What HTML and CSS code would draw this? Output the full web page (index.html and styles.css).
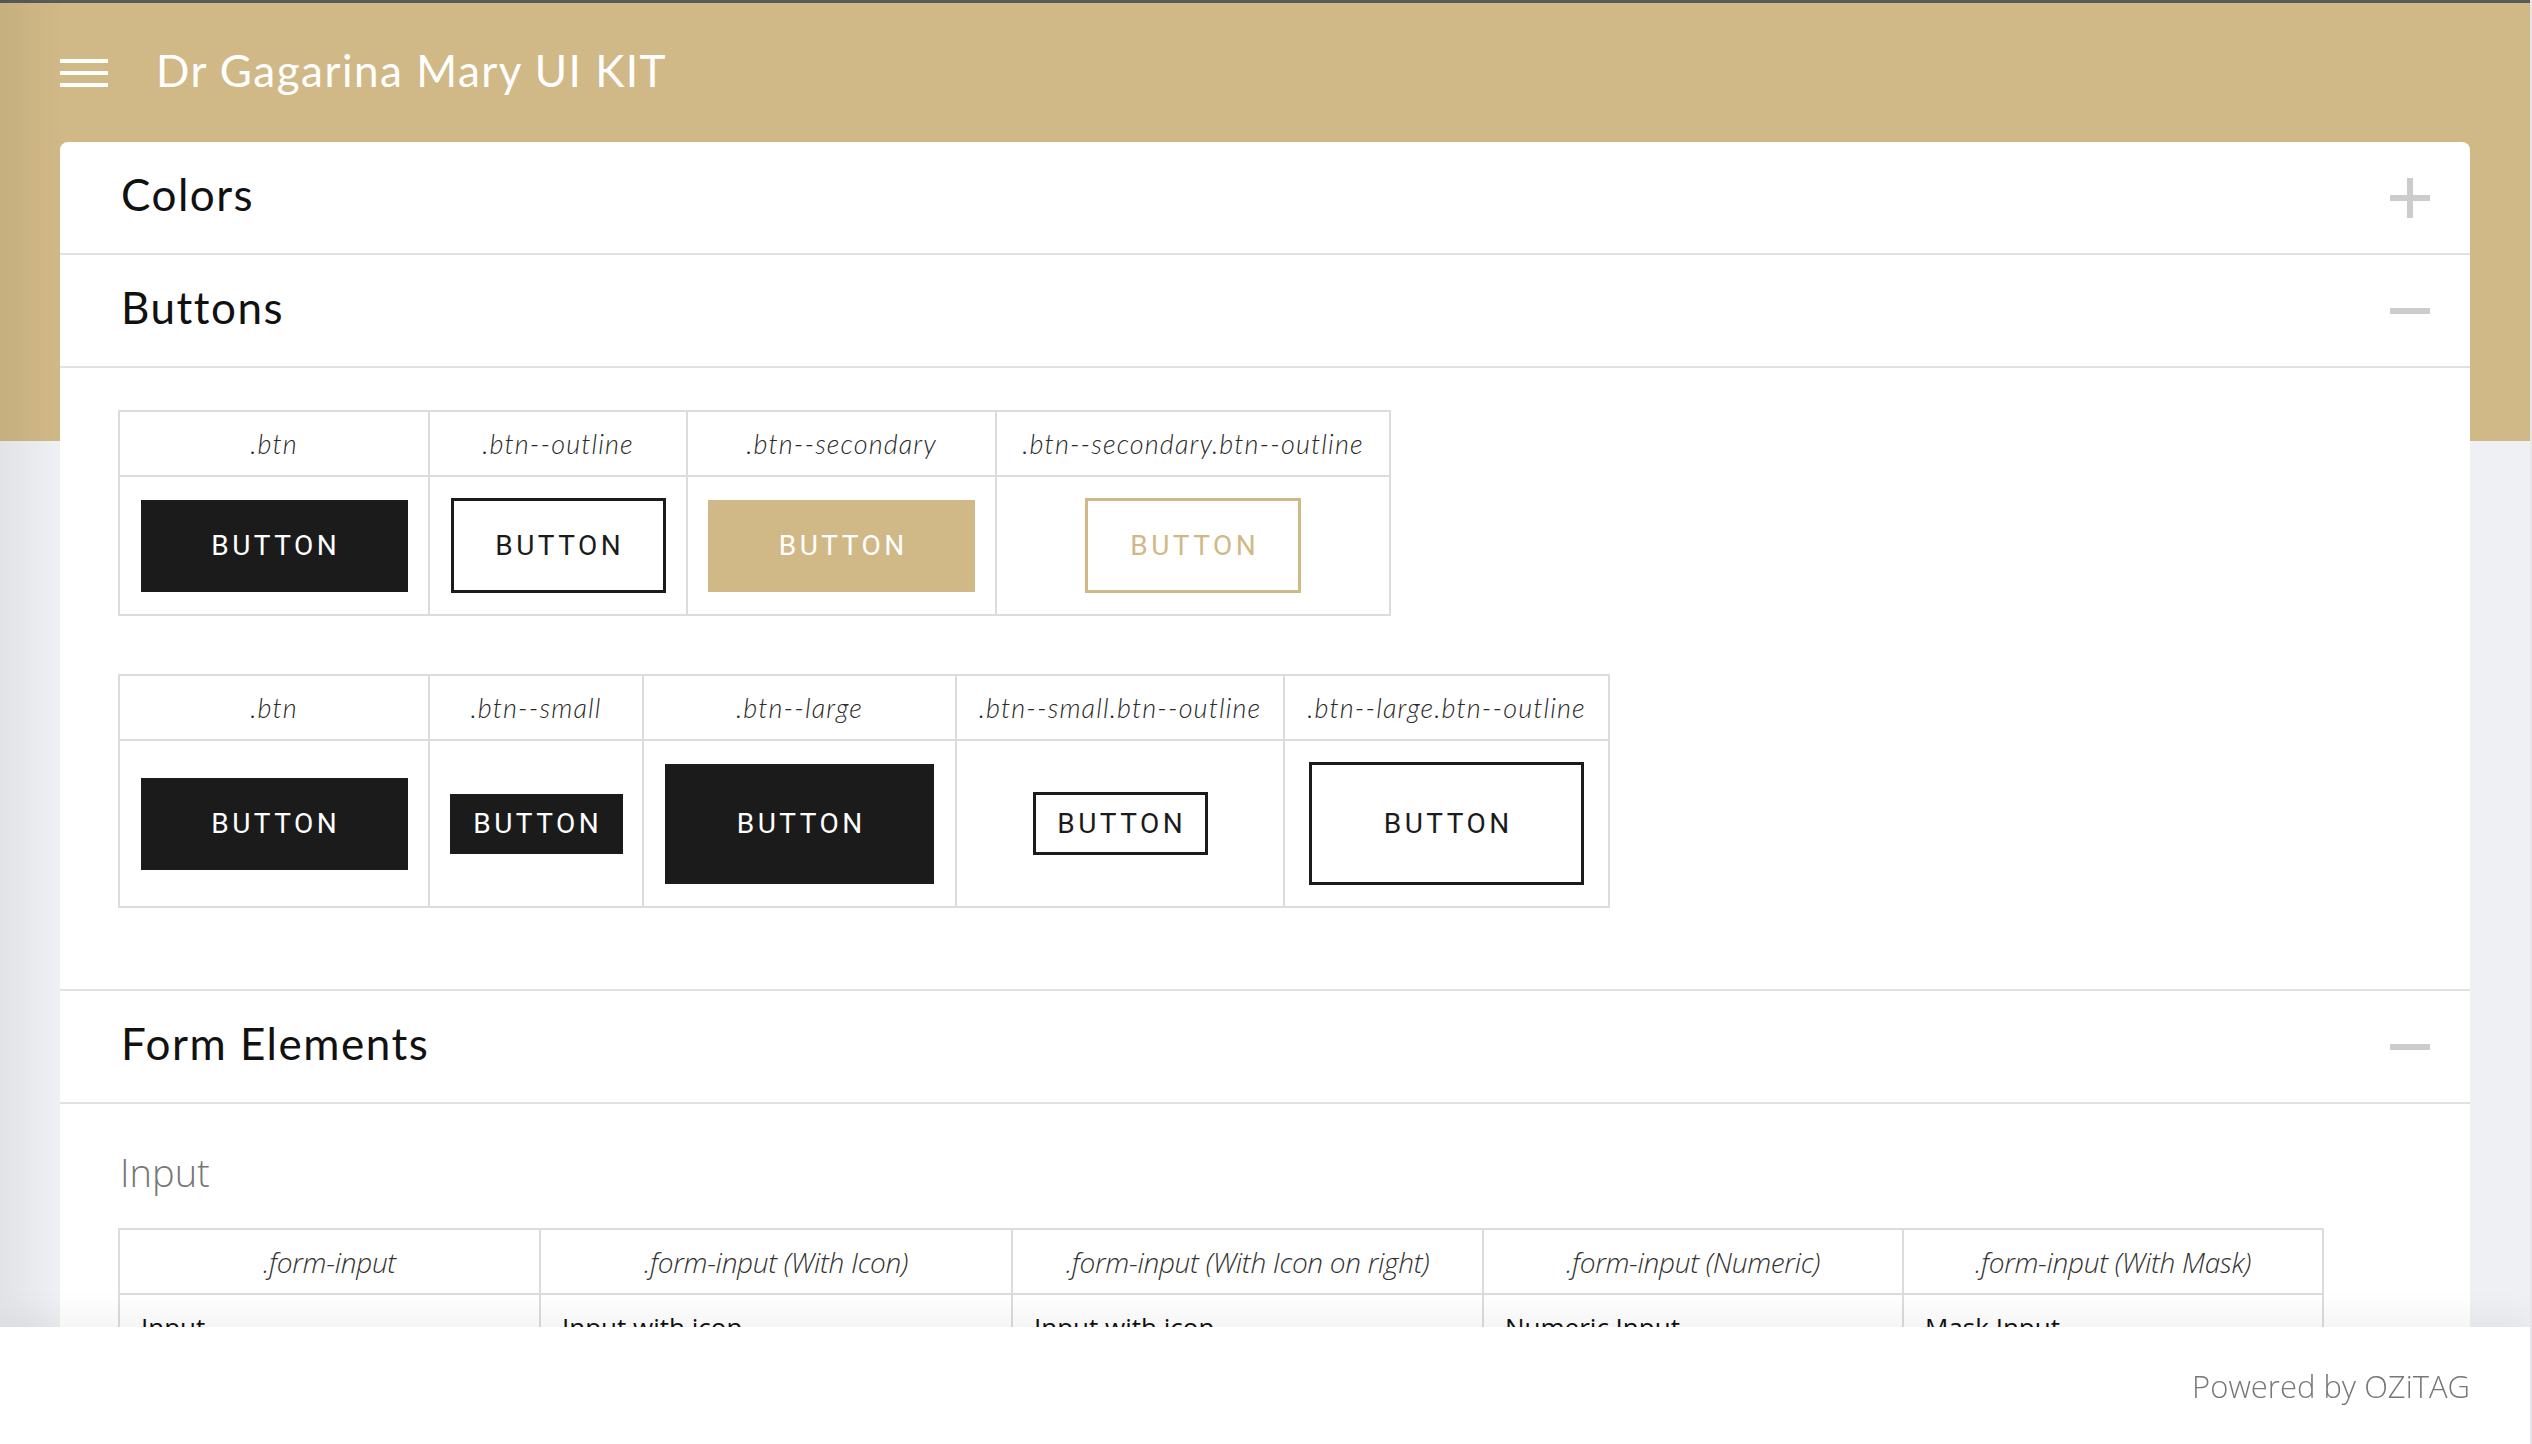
FILE: index.html
```html
<!DOCTYPE html>
<html lang="en">
<head>
<meta charset="utf-8">
<title>Dr Gagarina Mary UI KIT</title>
<link rel="stylesheet" href="styles.css">
</head>
<body>
<div class="page">
  <header class="topbar">
    <div class="burger"><span></span><span></span><span></span></div>
    <h1 class="app-title">Dr Gagarina Mary UI KIT</h1>
  </header>

  <main class="card">
    <section class="panel">
      <div class="panel-head">
        <h2 class="panel-title">Colors</h2>
        <svg class="toggle" width="40" height="40" viewBox="0 0 40 40"><rect x="0" y="17" width="40" height="6" fill="#cccccc"/><rect x="17" y="0" width="6" height="40" fill="#cccccc"/></svg>
      </div>
    </section>

    <section class="panel">
      <div class="panel-head">
        <h2 class="panel-title">Buttons</h2>
        <svg class="toggle" width="40" height="40" viewBox="0 0 40 40"><rect x="0" y="17" width="40" height="6" fill="#cccccc"/></svg>
      </div>
      <div class="panel-body buttons-body">
        <table class="demo demo-1">
          <colgroup><col class="w310"><col class="w258"><col class="w309"><col class="w394"></colgroup>
          <tr>
            <th>.btn</th><th>.btn--outline</th><th>.btn--secondary</th><th>.btn--secondary.btn--outline</th>
          </tr>
          <tr class="body-row">
            <td><button class="btn">BUTTON</button></td>
            <td><button class="btn btn--outline">BUTTON</button></td>
            <td><button class="btn btn--secondary">BUTTON</button></td>
            <td><button class="btn btn--secondary btn--outline">BUTTON</button></td>
          </tr>
        </table>

        <table class="demo demo-2">
          <colgroup><col class="w310"><col class="w214"><col class="w313"><col class="w328"><col class="w325"></colgroup>
          <tr>
            <th>.btn</th><th>.btn--small</th><th>.btn--large</th><th>.btn--small.btn--outline</th><th>.btn--large.btn--outline</th>
          </tr>
          <tr class="body-row">
            <td><button class="btn">BUTTON</button></td>
            <td><button class="btn btn--small">BUTTON</button></td>
            <td><button class="btn btn--large">BUTTON</button></td>
            <td><button class="btn btn--small btn--outline">BUTTON</button></td>
            <td><button class="btn btn--large btn--outline">BUTTON</button></td>
          </tr>
        </table>
      </div>
    </section>

    <section class="panel">
      <div class="panel-head">
        <h2 class="panel-title">Form Elements</h2>
        <svg class="toggle" width="40" height="40" viewBox="0 0 40 40"><rect x="0" y="17" width="40" height="6" fill="#cccccc"/></svg>
      </div>
      <div class="panel-body form-body">
        <h3 class="sub-title">Input</h3>
        <table class="demo demo-3">
          <colgroup><col class="w421"><col class="w472"><col class="w471"><col class="w420"><col class="w420"></colgroup>
          <tr class="form-head">
            <th>.form-input</th><th>.form-input (With Icon)</th><th>.form-input (With Icon on right)</th><th>.form-input (Numeric)</th><th>.form-input (With Mask)</th>
          </tr>
          <tr class="form-row">
            <td>Input</td><td>Input with icon</td><td>Input with icon</td><td>Numeric Input</td><td>Mask Input</td>
          </tr>
        </table>
      </div>
    </section>
  </main>

  <footer class="footer">Powered by OZiTAG</footer>
</div>
</body>
</html>
```

FILE: styles.css
```css
html, body {
  margin: 0;
  padding: 0;
}

body {
  height: 1444px;
  overflow: hidden;
  background: linear-gradient(#d1b987 0, #d1b987 441px, #eff0f4 441px, #eff0f4 100%);
  font-family: "Lato", "Open Sans", sans-serif;
  color: #111;
}

body::before {
  content: "";
  position: fixed;
  left: 0;
  top: 0;
  bottom: 0;
  width: 60px;
  background: linear-gradient(to right, rgba(0, 0, 0, 0.05), rgba(0, 0, 0, 0));
  pointer-events: none;
}

body::after {
  content: "";
  position: fixed;
  right: 0;
  top: 0;
  bottom: 0;
  width: 2px;
  background: #e6e6ea;
}

.page {
  height: 1444px;
  display: flex;
  flex-direction: column;
}

.topbar {
  border-top: 3px solid #5a5a5a;
  display: flex;
  align-items: center;
  padding-left: 60px;
  padding-bottom: 6px;
  box-sizing: border-box;
  height: 142px;
  flex-shrink: 0;
}

.burger {
  width: 48px;
  display: flex;
  flex-direction: column;
  gap: 8px;
  margin-right: 48px;
  margin-top: 6px;
}

.burger span {
  display: block;
  height: 4px;
  background: #ffffff;
}

.app-title {
  margin: 0;
  font-family: "Lato", sans-serif;
  font-weight: 400;
  font-size: 44px;
  letter-spacing: 1.5px;
  color: #ffffff;
}

.card {
  flex: 1;
  margin: 0 62px 0 60px;
  background: #ffffff;
  border-radius: 8px 8px 0 0;
  overflow: hidden;
}

.panel-head {
  height: 113px;
  box-sizing: border-box;
  border-bottom: 2px solid #e1e1e1;
  display: flex;
  align-items: center;
  justify-content: space-between;
  padding: 0 40px 8px 61px;
}

.panel-title {
  margin: 0;
  font-family: "Lato", sans-serif;
  font-weight: 400;
  font-size: 44px;
  letter-spacing: 1.5px;
  color: #111;
}

.toggle {
  display: block;
  margin-top: 8px;
}

.buttons-body {
  padding: 42px 0 81px 58px;
  display: flex;
  flex-direction: column;
  align-items: flex-start;
  gap: 58px;
  border-bottom: 2px solid #e1e1e1;
}

.demo {
  border-collapse: collapse;
  table-layout: fixed;
}

.demo-1 { width: 1273px; }
.demo-2 { width: 1492px; }
.demo-3 { width: 2206px; }

.w310 { width: 310px; }
.w258 { width: 258px; }
.w309 { width: 309px; }
.w394 { width: 394px; }
.w214 { width: 214px; }
.w313 { width: 313px; }
.w328 { width: 328px; }
.w325 { width: 325px; }
.w421 { width: 421px; }
.w472 { width: 472px; }
.w471 { width: 471px; }
.w420 { width: 420px; }

.demo th,
.demo td {
  border: 2px solid #dcdcdc;
  text-align: center;
  padding: 0;
}

.demo th {
  height: 63px;
  font-family: "Lato", sans-serif;
  font-style: italic;
  font-weight: 300;
  font-size: 27px;
  letter-spacing: 1.1px;
  color: #2a2a2a;
  white-space: nowrap;
}

.body-row td {
  padding: 21px 0;
  vertical-align: middle;
}

.btn {
  display: inline-flex;
  align-items: center;
  justify-content: center;
  vertical-align: middle;
  box-sizing: border-box;
  width: 267px;
  height: 92px;
  margin: 0;
  padding: 0 0 0 3.5px;
  border: none;
  border-radius: 0;
  background: #1b1b1b;
  color: #ffffff;
  font-family: "Roboto", "Liberation Sans", sans-serif;
  font-size: 28px;
  font-weight: 400;
  letter-spacing: 3.5px;
}

.btn--outline {
  width: 215px;
  height: 95px;
  background: #ffffff;
  color: #1b1b1b;
  border: 3px solid #1b1b1b;
}

.btn--secondary {
  background: #d1b987;
  color: #ffffff;
}

.btn--secondary.btn--outline {
  width: 216px;
  background: #ffffff;
  color: #d1b987;
  border-color: #d1b987;
}

.btn--small {
  width: 173px;
  height: 60px;
}

.btn--large {
  width: 269px;
  height: 120px;
}

.btn--small.btn--outline {
  width: 175px;
  height: 63px;
}

.btn--large.btn--outline {
  width: 275px;
  height: 123px;
}

.form-body {
  padding: 42px 58px 0 58px;
}

.sub-title {
  margin: 0 0 30px 2px;
  font-family: "Open Sans", sans-serif;
  font-weight: 300;
  font-size: 38px;
  line-height: 52px;
  color: #777;
}

.demo .form-head th {
  font-family: "Open Sans", sans-serif;
  font-weight: 300;
  font-size: 28px;
  letter-spacing: -0.3px;
  color: #333;
}

.form-row td {
  text-align: left;
  vertical-align: top;
  padding: 14px 21px 30px;
  font-family: "Open Sans", sans-serif;
  font-size: 26px;
  color: #111;
}

.footer {
  position: fixed;
  left: 0;
  right: 0;
  bottom: 0;
  height: 117px;
  background: #ffffff;
  display: flex;
  align-items: center;
  justify-content: flex-end;
  padding-right: 62px;
  font-family: "Open Sans", sans-serif;
  font-weight: 300;
  font-size: 31px;
  color: #777;
  box-shadow: 0 -12px 30px rgba(0, 0, 0, 0.05);
}
```
